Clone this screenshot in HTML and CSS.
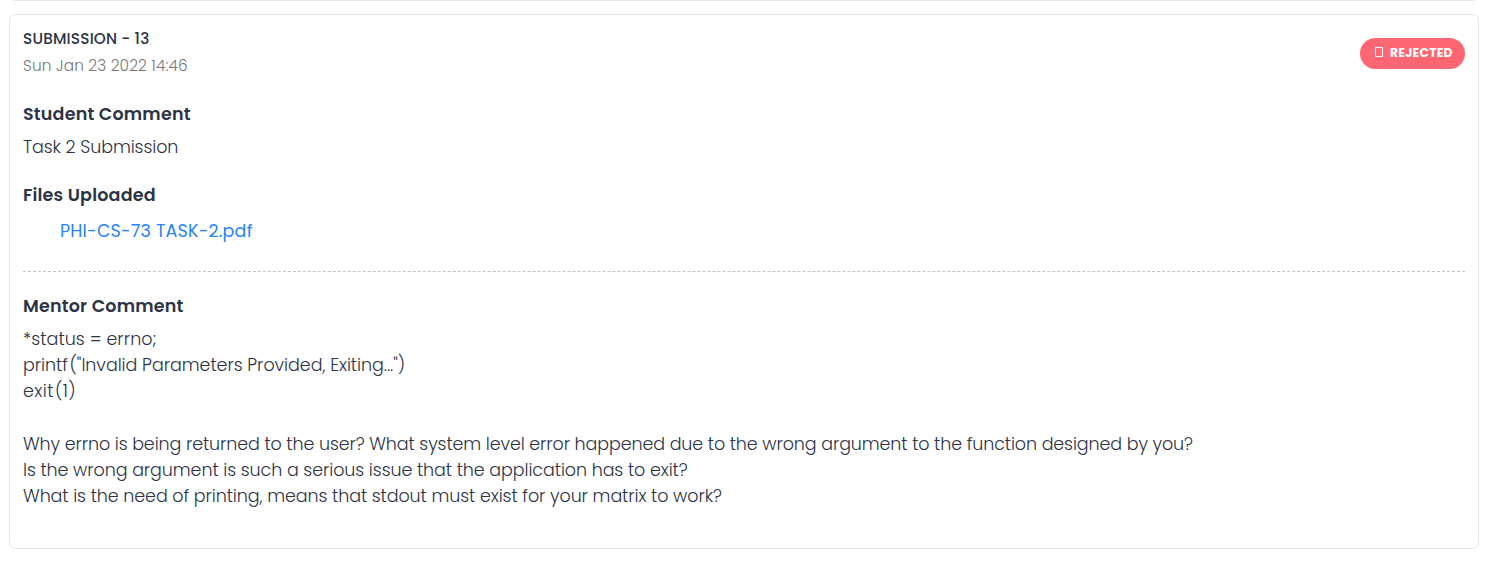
FILE: index.html
```
<!DOCTYPE html>
<html lang="en">
<head>
<meta charset="utf-8">
<title>Submission</title>
<link rel="stylesheet" href="styles.css">
</head>
<body>
<div class="previous-card"></div>
<article class="card">
  <header class="card-header">
    <div>
      <h2 class="title">SUBMISSION - 13</h2>
      <p class="date">Sun Jan 23 2022 14:46</p>
    </div>
    <span class="badge"><span class="badge-icon"></span>REJECTED</span>
  </header>
  <section class="student">
    <h3 class="heading">Student Comment</h3>
    <p class="text">Task 2 Submission</p>
  </section>
  <section class="files">
    <h3 class="heading">Files Uploaded</h3>
    <a class="file">PHI-CS-73 TASK-2.pdf</a>
  </section>
  <section class="mentor">
    <h3 class="heading">Mentor Comment</h3>
    <p class="text"><span class="code">*status = errno;<br><span class="print">print<span class="call">f</span>("Invalid Parameters Provided, Exiting...")</span><br><span class="exit">exi<span class="call">t</span>(1)</span></span><br><br><span class="question">Why errno is being returned to the user? What system level error happened due to the wrong argument to the function designed by you?</span><br>Is the wrong argument is such a serious issue that the application has to exit?<br>What is the need of printing, means that stdout must exist for your matrix to work?</p>
  </section>
</article>
</body>
</html>
```
FILE: styles.css
```
* { box-sizing: border-box; margin: 0; }
body { background: #fff; color: #2c3345; font-family: Poppins, Inter, sans-serif; font-size: 17.5px; line-height: 26.15px; padding: 0 11px 0 9px; }
.previous-card { height: 1px; margin: 0 4px; background: #e6e6e6; }
.card { height: 535px; margin-top: 13px; padding: 10px 13px; border: 1px solid #e6e6e6; border-radius: 6px; }
.card-header { display: flex; justify-content: space-between; align-items: flex-start; height: 76px; }
.title { font-size: 15.3px; font-weight: 500; line-height: 27px; letter-spacing: 0.17px; }
.date { font-size: 15.3px; font-weight: 300; line-height: 27px; color: #777; letter-spacing: 0.15px; }
.badge { display: flex; align-items: center; width: 105px; height: 31px; margin-top: 13px; padding: 0 0 1px 15px; gap: 7px; border-radius: 16px; background: #ff6673; color: #fff; font-size: 12.25px; font-weight: 700; letter-spacing: 0.3px; }
.badge-icon { width: 8px; height: 10px; margin-bottom: 2px; border: 1px solid #fff; }
.heading { font-size: 17.5px; font-weight: 600; line-height: 26px; letter-spacing: 0.2px; }
.text { margin-top: 7px; font-weight: 300; letter-spacing: -0.085px; }
.code { letter-spacing: 0.06px; }
.print { letter-spacing: -0.05px; }
.call { letter-spacing: 1.6px; }
.exit { letter-spacing: 0.4px; }
.question { letter-spacing: -0.105px; }
.student { height: 81px; }
.files { height: 90px; border-bottom: 1px dashed #c4c4c4; }
.file { display: block; margin-top: 10px; padding-left: 37px; color: #2684f5; font-weight: 400; letter-spacing: 0.18px; }
.mentor { padding-top: 21px; }
```
